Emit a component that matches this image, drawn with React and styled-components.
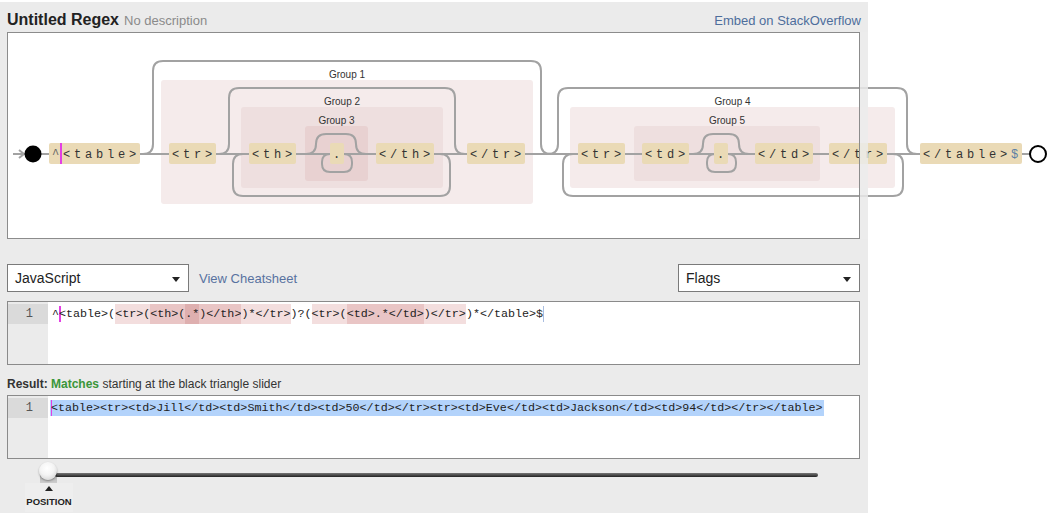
import React from 'react'
import styled, { createGlobalStyle } from 'styled-components'

const GlobalStyle = createGlobalStyle`
  body {
    margin: 0;
    background: #fff;
    overflow: hidden;
    font-family: "Liberation Sans", Arial, sans-serif;
  }
`

const MONO = '"Liberation Mono", "Courier New", monospace'
const LINE = '#a2a2a2'
const HL = ['transparent', '#f3dede', '#e9c5c5', '#deafaf']

const Page = styled.div`
  width: 868px;
  height: 511px;
  margin-top: 2px;
  padding: 0 8px 0 7px;
  box-sizing: border-box;
  background: #ebebeb;
`
const Header = styled.div`
  display: flex;
  align-items: baseline;
  height: 30px;
  padding-top: 9px;
  box-sizing: border-box;
  line-height: 18px;
`
const Title = styled.span`
  font-size: 16px;
  font-weight: bold;
  color: #222;
`
const Desc = styled.span`
  margin-left: 5px;
  font-size: 13px;
  color: #8a8a8a;
`
const Embed = styled.span`
  margin-left: auto;
  margin-right: -1px;
  font-size: 13px;
  color: #4e6e9c;
`
const DiagramPanel = styled.div`
  position: relative;
  height: 207px;
  border: 1px solid #8c8c8c;
  box-sizing: border-box;
  background: #fff;
  &::after {
    content: '';
    position: absolute;
    top: -1px;
    bottom: -1px;
    right: -9px;
    width: 9px;
    box-sizing: border-box;
    border-left: 1px solid #8c8c8c;
    background: rgba(235, 235, 235, 0.82);
  }
`
const DiagramSvg = styled.svg`
  display: block;
  overflow: visible;
`
const Toolbar = styled.div`
  display: flex;
  align-items: center;
  margin-top: 25px;
  height: 28px;
`
const Select = styled.div`
  width: 182px;
  height: 28px;
  display: flex;
  align-items: center;
  justify-content: space-between;
  padding: 0 8px 0 7px;
  box-sizing: border-box;
  border: 1px solid #7a7a7a;
  background: #fff;
  font-size: 14px;
  color: #222;
  margin-left: ${p => (p.$right ? 'auto' : '0')};
`
const Caret = styled.span`
  width: 0;
  height: 0;
  margin-top: 2px;
  border-left: 4px solid transparent;
  border-right: 4px solid transparent;
  border-top: 5px solid #222;
`
const Cheatsheet = styled.span`
  margin-left: 10px;
  font-size: 13px;
  color: #5872a0;
`
const Editor = styled.div`
  display: flex;
  height: 64px;
  margin-top: ${p => p.$top || 0}px;
  border: 1px solid #8a8a8a;
  box-sizing: border-box;
  background: #fff;
`
const Gutter = styled.div`
  width: 40px;
  padding-top: 2px;
  background: #ebebeb;
`
const GutterLine = styled.div`
  height: 20px;
  line-height: 20px;
  padding-right: 15px;
  text-align: right;
  background: #dadada;
  font-family: ${MONO};
  font-size: 12px;
  color: #555;
`
const Code = styled.div`
  padding: 2px 0 0 4px;
  font-family: ${MONO};
  font-size: 11.7px;
  line-height: 20px;
  white-space: pre;
  color: #222;
`
const Seg = styled.span`
  display: inline-block;
  background: ${p => HL[p.$level || 0]};
`
const Cursor = styled.span`
  display: inline-block;
  height: 16px;
  vertical-align: middle;
  border-left: ${p => p.$w || 2}px solid ${p => p.$color || '#e33fe3'};
  margin-right: -${p => p.$w || 2}px;
`
const Selected = styled.span`
  display: inline-block;
  line-height: 13px;
  padding: 0 1px;
  margin-left: -2px;
  background: #b3d3fb;
`
const ResultLabel = styled.div`
  margin-top: 11px;
  height: 16px;
  line-height: 16px;
  margin-bottom: 3px;
  font-size: 12px;
  color: #333;
`
const Strong = styled.b`
  color: ${p => p.$color || '#333'};
`
const SliderArea = styled.div`
  position: relative;
  height: 53px;
  padding-top: 14px;
  box-sizing: border-box;
`
const Track = styled.div`
  width: 763px;
  height: 4px;
  margin-left: 48px;
  border-radius: 2px;
  background: linear-gradient(#777, #222);
`
const KnobShadow = styled.div`
  position: absolute;
  left: 33px;
  top: 12px;
  width: 17px;
  height: 20px;
  background: linear-gradient(rgba(0, 0, 0, 0.3), rgba(0, 0, 0, 0));
`
const Knob = styled.div`
  position: absolute;
  left: 32px;
  top: 3px;
  width: 18px;
  height: 18px;
  border-radius: 50%;
  background: radial-gradient(circle at 45% 35%, #fff 0, #f4f4f4 45%, #c8c8c8 100%);
  box-shadow: 0 1px 2px rgba(0, 0, 0, 0.35);
`
const PositionTag = styled.div`
  position: absolute;
  left: 18px;
  top: 24px;
  width: 48px;
  height: 29px;
  display: flex;
  flex-direction: column;
  align-items: center;
  padding-top: 3px;
  box-sizing: border-box;
  background: #eeeeee;
`
const Arrow = styled.span`
  width: 0;
  height: 0;
  border-left: 4px solid transparent;
  border-right: 4px solid transparent;
  border-bottom: 5px solid #222;
`
const PositionText = styled.span`
  margin-top: 5px;
  font-size: 9.5px;
  font-weight: bold;
  color: #222;
  line-height: 12px;
`

// diagram geometry, page coordinates
const Y = 154
const skip = (xs, xe, yt, r = 10) =>
  `M${xs},${Y} q${r},0 ${r},-${r} V${yt + r} q0,-${r} ${r},-${r} H${xe - 2 * r} q${r},0 ${r},${r} V${Y - r} q0,${r} ${r},${r}`
const loop = (xl, xr, yb, r = 10) =>
  `M${xl + r},${Y} q-${r},0 -${r},${r} V${yb - r} q0,${r} ${r},${r} H${xr - r} q${r},0 ${r},-${r} V${Y + r} q0,-${r} -${r},-${r}`

const groups = [
  { x: 161, y: 80, w: 372, h: 124, fill: '#f5ebeb', label: 'Group 1' },
  { x: 241, y: 107, w: 202, h: 81, fill: '#eedfdf', label: 'Group 2' },
  { x: 305, y: 126, w: 63, h: 55, fill: '#e8d1d1', label: 'Group 3' },
  { x: 570, y: 107, w: 325, h: 81, fill: '#f5ebeb', label: 'Group 4' },
  { x: 634, y: 126, w: 186, h: 55, fill: '#eedfdf', label: 'Group 5' },
]

const paths = [
  skip(143, 551, 61),
  skip(219, 465, 88),
  loop(233, 450, 196),
  skip(306, 366, 134),
  loop(322, 352, 172, 8),
  skip(548, 917, 88),
  loop(563, 903, 196),
  skip(693, 749, 134),
  loop(707, 736, 172, 8),
]

const boxes = [
  { x: 169, t: '<tr>' },
  { x: 249, t: '<th>' },
  { x: 330, t: '.' },
  { x: 376, t: '</th>' },
  { x: 467, t: '</tr>' },
  { x: 578, t: '<tr>' },
  { x: 642, t: '<td>' },
  { x: 714, t: '.' },
  { x: 755, t: '</td>' },
  { x: 829, t: '</tr>' },
]

const Box = ({ x, n, children }) => (
  <g>
    <rect x={x} y={143} width={11 * n + 3} height={21} rx={2} fill="#eadab6" />
    <text x={x + 3} y={158} fontFamily={MONO} fontSize={12} letterSpacing={3.8} fill="#333">
      {children}
    </text>
  </g>
)

const Diagram = () => (
  <DiagramSvg width={1050} height={205} viewBox="8 33 1050 205">
    {groups.map(g => (
      <g key={g.label}>
        <rect x={g.x} y={g.y} width={g.w} height={g.h} rx={3} fill={g.fill} />
        <text
          x={g.x + g.w / 2}
          y={g.y - 2}
          textAnchor="middle"
          fontFamily="Liberation Sans, Arial, sans-serif"
          fontSize={10}
          fill="#333"
        >
          {g.label}
        </text>
      </g>
    ))}
    <g fill="none" stroke={LINE} strokeWidth={2}>
      <path d={`M13,${Y} H1030`} />
      <path d={`M19,${Y - 4} L24,${Y} L19,${Y + 4}`} />
      {paths.map((d, i) => <path key={i} d={d} />)}
    </g>
    <circle cx={33} cy={Y} r={8.5} fill="#000" />
    <Box x={49} n={8}>
      <tspan fill="#666">^</tspan>
      {'<table>'}
    </Box>
    <rect x={60} y={143} width={2} height={21} fill="#e33fe3" />
    {boxes.map(b => (
      <Box key={b.x} x={b.x} n={b.t.length}>{b.t}</Box>
    ))}
    <Box x={920} n={9}>
      {'</table>'}
      <tspan fill="#5a80a4">$</tspan>
    </Box>
    <circle cx={1038} cy={Y} r={8} fill="#fff" stroke="#000" strokeWidth={2} />
  </DiagramSvg>
)

const regexParts = [
  ['^', 0], ['|'], ['<table>(', 0], ['<tr>(', 1], ['<th>(', 2], ['.*', 3], [')</th>', 2],
  [')*</tr>', 1], [')?(', 0], ['<tr>(', 1], ['<td>.*</td>', 2], [')</tr>', 1], [')*</table>$', 0],
]

const resultText =
  '<table><tr><td>Jill</td><td>Smith</td><td>50</td></tr><tr><td>Eve</td><td>Jackson</td><td>94</td></tr></table>'

export default function App() {
  return (
    <>
      <GlobalStyle />
      <Page>
        <Header>
          <Title>Untitled Regex</Title>
          <Desc>No description</Desc>
          <Embed>Embed on StackOverflow</Embed>
        </Header>
        <DiagramPanel>
          <Diagram />
        </DiagramPanel>
        <Toolbar>
          <Select>
            JavaScript
            <Caret />
          </Select>
          <Cheatsheet>View Cheatsheet</Cheatsheet>
          <Select $right>
            Flags
            <Caret />
          </Select>
        </Toolbar>
        <Editor $top={9}>
          <Gutter>
            <GutterLine>1</GutterLine>
          </Gutter>
          <Code>
            {regexParts.map(([t, level], i) =>
              t === '|' ? <Cursor key={i} /> : <Seg key={i} $level={level}>{t}</Seg>
            )}
            <Cursor $w={1} $color="#a9bde0" />
          </Code>
        </Editor>
        <ResultLabel>
          <Strong>Result:</Strong> <Strong $color="#3a963a">Matches</Strong> starting at the black triangle slider
        </ResultLabel>
        <Editor>
          <Gutter>
            <GutterLine>1</GutterLine>
          </Gutter>
          <Code>
            <Selected>
              <Cursor $w={1} />
              {resultText}
            </Selected>
          </Code>
        </Editor>
        <SliderArea>
          <Track />
          <KnobShadow />
          <Knob />
          <PositionTag>
            <Arrow />
            <PositionText>POSITION</PositionText>
          </PositionTag>
        </SliderArea>
      </Page>
    </>
  )
}
